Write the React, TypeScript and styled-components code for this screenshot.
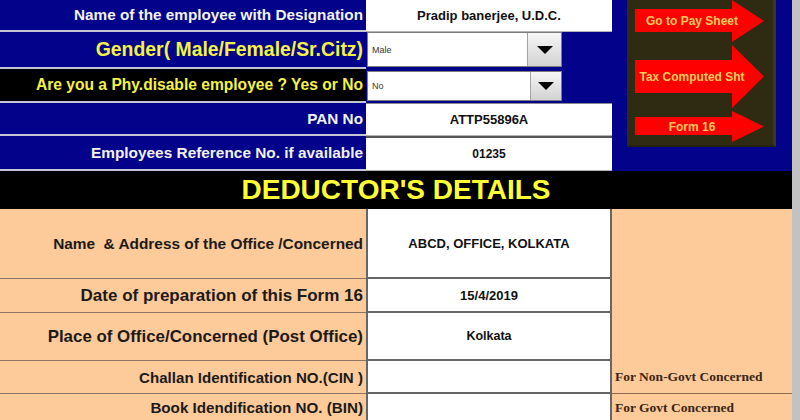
import styled, { createGlobalStyle } from "styled-components";

const GlobalStyle = createGlobalStyle`
  html, body {
    margin: 0;
    padding: 0;
    background: #c2c2c2;
  }
  body {
    font-family: "Liberation Sans", Arial, sans-serif;
  }
`;

const NAVY = "#02028a";
const PEACH = "#fdca99";

const Sheet = styled.div`
  width: 792px;
  height: 420px;
  overflow: hidden;
  display: flex;
  flex-direction: column;
  & > * {
    flex: none;
  }
`;

const TopGrid = styled.div`
  display: grid;
  grid-template-columns: 366px 246px 180px;
  grid-template-rows: 32px 37px 34px 33px 35px;
`;

const BottomGrid = styled.div`
  display: grid;
  grid-template-columns: 366px 246px 180px;
  grid-template-rows: 70px 34px 48px 33px 28px;
`;

type Tone = "navy" | "black" | "peach";

const toneBg = (t: Tone) => (t === "navy" ? NAVY : t === "black" ? "#000" : PEACH);

const Label = styled.div<{ $tone: Tone; $color: string; $size: number }>`
  box-sizing: border-box;
  display: flex;
  align-items: center;
  justify-content: flex-end;
  padding-right: 3px;
  background: ${(p) => toneBg(p.$tone)};
  color: ${(p) => p.$color};
  font-size: ${(p) => p.$size}px;
  font-weight: bold;
  white-space: pre;
  border-bottom: ${(p) => (p.$tone === "peach" ? "1px solid #8c7464" : "2px solid #c4c4d2")};
`;

const TopValue = styled.div<{ $line?: string; $size?: number }>`
  box-sizing: border-box;
  display: flex;
  align-items: center;
  justify-content: center;
  background: #fff;
  color: #111;
  font-size: ${(p) => p.$size ?? 13}px;
  font-weight: bold;
  border-top: ${(p) => p.$line ?? "none"};
  border-bottom: 1px solid #b0b0b0;
`;

const ComboCell = styled.div<{ $pad: string }>`
  box-sizing: border-box;
  background: ${NAVY};
  padding: ${(p) => p.$pad};
  display: flex;
`;

const Combo = styled.div`
  box-sizing: border-box;
  width: 195px;
  height: 100%;
  display: flex;
  background: #fff;
  border: 1px solid #7c7c7c;
`;

const ComboText = styled.span`
  flex: 1;
  display: flex;
  align-items: center;
  padding-left: 4px;
  font-size: 9px;
  color: #333;
`;

const ComboButton = styled.div<{ $w: number }>`
  width: ${(p) => p.$w}px;
  display: flex;
  align-items: center;
  justify-content: center;
  background: linear-gradient(#f6f6f6, #d2d2d2);
  border-left: 1px solid #a4a4a4;
`;

const Caret = styled.span`
  width: 0;
  height: 0;
  border-left: 8px solid transparent;
  border-right: 8px solid transparent;
  border-top: 8px solid #000;
`;

const NavSide = styled.div`
  grid-column: 3;
  grid-row: 1 / span 5;
  background: ${NAVY};
  padding-left: 15px;
`;

const NavPanel = styled.div`
  box-sizing: border-box;
  width: 149px;
  height: 147px;
  background: #2e2b12;
  border-right: 3px solid #3a371c;
  border-bottom: 2px solid #24220e;
  padding-left: 8px;
  display: flex;
  flex-direction: column;
  gap: 3px;
`;

const Arrow = styled.div<{ $h: number; $top: number; $bottom: number }>`
  width: 129px;
  height: ${(p) => p.$h}px;
  flex: none;
  background: #fe0000;
  clip-path: polygon(
    0 ${(p) => p.$top}px,
    97px ${(p) => p.$top}px,
    97px 0,
    129px 50%,
    97px 100%,
    97px ${(p) => p.$bottom}px,
    0 ${(p) => p.$bottom}px
  );
  display: flex;
  align-items: center;
  justify-content: center;
  padding-right: 15px;
  box-sizing: border-box;
  color: #ffc95c;
  font-size: 12px;
  font-weight: bold;
  white-space: nowrap;
  cursor: pointer;
`;

const Header = styled.div`
  height: 38px;
  background: #000;
  color: #ffff33;
  font-size: 28px;
  font-weight: bold;
  display: flex;
  align-items: center;
  justify-content: center;
`;

const Value = styled.div<{ $size?: number }>`
  box-sizing: border-box;
  display: flex;
  align-items: center;
  justify-content: center;
  background: #fff;
  color: #111;
  font-size: ${(p) => p.$size ?? 13}px;
  font-weight: bold;
  border-left: 2px solid #666;
  border-right: 2px solid #666;
  border-bottom: 2px solid #666;
`;

const PeachSpace = styled.div`
  grid-column: 3;
  grid-row: 1 / span 3;
  background: ${PEACH};
`;

const Note = styled.div<{ $line?: boolean }>`
  box-sizing: border-box;
  display: flex;
  align-items: center;
  padding-left: 3px;
  background: ${PEACH};
  color: #3a2616;
  font-family: "Liberation Serif", "Times New Roman", serif;
  font-size: 13.5px;
  font-weight: bold;
  border-bottom: ${(p) => (p.$line ? "1px solid #8c6a52" : "none")};
`;

export default function App() {
  return (
    <>
      <GlobalStyle />
      <Sheet>
        <TopGrid>
          <Label $tone="navy" $color="#f2f2f2" $size={15.3}>
            Name of the employee with Designation
          </Label>
          <TopValue>Pradip banerjee, U.D.C.</TopValue>
          <NavSide>
            <NavPanel>
              <Arrow $h={42} $top={9} $bottom={32}>Go to Pay Sheet</Arrow>
              <Arrow $h={63} $top={15} $bottom={48}>Tax Computed Sht</Arrow>
              <Arrow $h={31} $top={6} $bottom={24}>Form 16</Arrow>
            </NavPanel>
          </NavSide>

          <Label $tone="navy" $color="#f4f244" $size={19.4}>
            Gender( Male/Female/Sr.Citz)
          </Label>
          <ComboCell $pad="0 1px 2px 1px">
            <Combo>
              <ComboText>Male</ComboText>
              <ComboButton $w={33}>
                <Caret />
              </ComboButton>
            </Combo>
          </ComboCell>

          <Label $tone="black" $color="#f4f244" $size={15.6}>
            Are you a Phy.disable employee ? Yes or No
          </Label>
          <ComboCell $pad="2px 1px 2px 1px">
            <Combo>
              <ComboText>No</ComboText>
              <ComboButton $w={30}>
                <Caret />
              </ComboButton>
            </Combo>
          </ComboCell>

          <Label $tone="navy" $color="#f2f2f2" $size={15.3}>
            PAN No
          </Label>
          <TopValue $line="1px solid #8a8a8a">ATTP55896A</TopValue>

          <Label $tone="navy" $color="#f2f2f2" $size={15.4}>
            Employees Reference No. if available
          </Label>
          <TopValue $line="2px solid #555" $size={12}>01235</TopValue>
        </TopGrid>

        <Header>DEDUCTOR'S DETAILS</Header>

        <BottomGrid>
          <Label $tone="peach" $color="#1c1a18" $size={15.4}>
            {"Name  & Address of the Office /Concerned"}
          </Label>
          <Value>ABCD, OFFICE, KOLKATA</Value>
          <PeachSpace />

          <Label $tone="peach" $color="#1c1a18" $size={17}>
            Date of preparation of this Form 16
          </Label>
          <Value>15/4/2019</Value>

          <Label $tone="peach" $color="#1c1a18" $size={16.9}>
            Place of Office/Concerned (Post Office)
          </Label>
          <Value $size={12.5}>Kolkata</Value>

          <Label $tone="peach" $color="#1c1a18" $size={15.1}>
            Challan Identification NO.(CIN )
          </Label>
          <Value />
          <Note $line>For Non-Govt Concerned</Note>

          <Label $tone="peach" $color="#1c1a18" $size={15.2}>
            Book Idendification NO. (BIN)
          </Label>
          <Value />
          <Note>For Govt Concerned</Note>
        </BottomGrid>
      </Sheet>
    </>
  );
}
